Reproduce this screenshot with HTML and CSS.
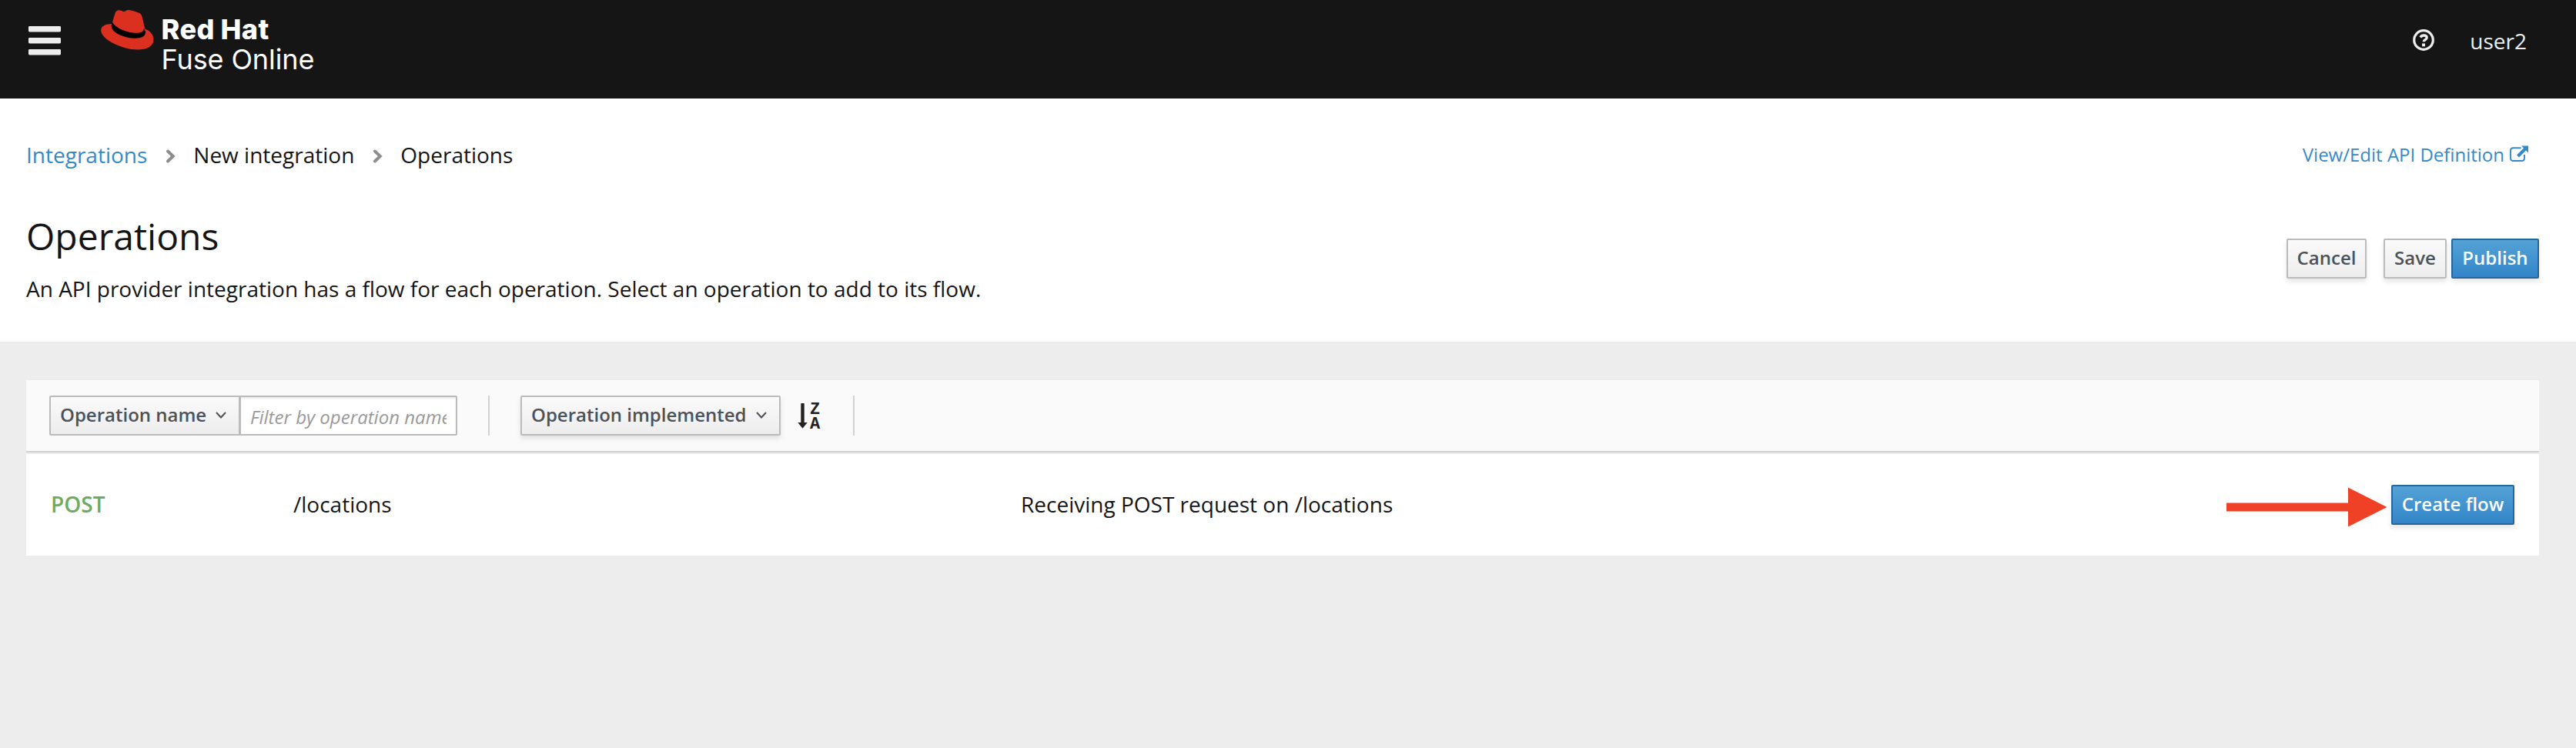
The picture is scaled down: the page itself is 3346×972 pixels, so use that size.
FILE: index.html
```html
<!DOCTYPE html>
<html lang="en">
<head>
<meta charset="utf-8">
<title>Fuse Online - Operations</title>
<link rel="stylesheet" href="styles.css">
</head>
<body>
<header class="masthead">
  <button class="menu" aria-label="Menu">
    <svg width="42" height="38" viewBox="0 0 42 38"><g fill="#ededed"><rect y="0" width="42" height="7.4" rx="1.4"/><rect y="15" width="42" height="7.4" rx="1.4"/><rect y="30" width="42" height="7.4" rx="1.4"/></g></svg>
  </button>
  <a class="brand">
    <svg class="hat" width="69" height="52" viewBox="0 0 69 52">
      <path fill="#db3020" d="M14.500 18C5 18 .2 21.500 .2 26.500C.2 38 27 51.500 48 51.500C60 51.500 68.500 47 68.500 38.500C68.500 32 64.500 27.500 57.300 24.500L53.500 8.500C52.600 5.500 51.500 4.500 47.500 3C44 1.500 38.500 0 35.500 0C33 0 32 2 30 2C28 2 26.500 .3 23.500 .3C20.800 .3 19.300 1.800 18.200 5C17.200 8.500 15.300 15 14.500 18Z"/>
      <path fill="#000" d="M15 15.500C18 23.500 35 29.800 46 29.800C53 29.800 55.500 27.500 56 24L57.800 27.500C58.800 33 54.500 36.800 45 36.800C32 36.800 15 30.500 13.700 21.500C13.500 19.500 14.300 17.500 15 15.500Z"/>
    </svg>
    <span class="wordmark"><b class="company">Red Hat</b><span class="product">Fuse Online</span></span>
  </a>
  <div class="tools">
    <svg width="28" height="28" viewBox="0 0 28 28" fill="none" stroke="#ededed"><circle cx="14" cy="14" r="12.300" stroke-width="3.200"/><path d="M9.800 10.500C11 8.700 12.500 8 14.200 8C16.500 8 18.200 9 18.200 11C18.200 13.600 14.200 13.400 14.200 16.300" stroke-width="3.300"/><path d="M14 18.500V22.300" stroke-width="4"/></svg>
    <span class="user">user2</span>
  </div>
</header>

<section class="page-head">
  <div class="crumb-row">
    <nav class="crumbs">
      <a class="link">Integrations</a>
      <svg class="sep" width="12" height="18" viewBox="0 0 12 18"><path d="M2 2.500L8.800 9L2 15.500" fill="none" stroke="#8b8d8f" stroke-width="4" stroke-linecap="round"/></svg>
      <span class="crumb-mid">New integration</span>
      <svg class="sep" width="12" height="18" viewBox="0 0 12 18"><path d="M2 2.500L8.800 9L2 15.500" fill="none" stroke="#8b8d8f" stroke-width="4" stroke-linecap="round"/></svg>
      <span class="crumb-last">Operations</span>
    </nav>
    <a class="link api-link">View/Edit API Definition
      <svg width="24" height="22" viewBox="0 0 24 22"><path d="M14.500 3.200H4.500Q1 3.200 1 6.500V16.500Q1 20 4.500 20H15.500Q19 20 19 16.500V12" fill="none" stroke="#338aca" stroke-width="1.900"/><path d="M10.500 14L20 4.500" fill="none" stroke="#338aca" stroke-width="4"/><path d="M15 .5H24V9.500Z" fill="#338aca"/></svg>
    </a>
  </div>
  <div class="title-row">
    <div>
      <h1 class="title">Operations</h1>
      <p class="lead">An API provider integration has a flow for each operation. Select an operation to add to its flow.</p>
    </div>
    <div class="actions">
      <button class="btn cancel">Cancel</button>
      <button class="btn save">Save</button>
      <button class="btn primary publish">Publish</button>
    </div>
  </div>
</section>

<main class="panel">
  <div class="toolbar">
    <button class="btn filter-type"><span>Operation name</span><svg width="14" height="9" viewBox="0 0 14 9"><path d="M1 1L7 7.500L13 1" fill="none" stroke="#4d5258" stroke-width="2"/></svg></button>
    <input class="filter-input" type="text" placeholder="Filter by operation name">
    <span class="rule"></span>
    <button class="btn sort-type"><span>Operation implemented</span><svg width="14" height="9" viewBox="0 0 14 9"><path d="M1 1L7 7.500L13 1" fill="none" stroke="#4d5258" stroke-width="2"/></svg></button>
    <svg class="sort-icon" width="30" height="36" viewBox="0 0 30 36"><path d="M4.300 2.500Q4.300 2 4.800 2H8.200Q8.700 2 8.700 2.500V27H12.700L6.500 34.800L.3 27H4.300Z" fill="#222"/><text class="sort-letter" x="22.500" y="16">Z</text><text class="sort-letter" x="22.500" y="34.800">A</text></svg>
    <span class="rule rule-end"></span>
  </div>
  <div class="row">
    <span class="method">POST</span>
    <span class="path">/locations</span>
    <span class="desc">Receiving POST request on /locations</span>
    <svg class="pointer" width="210" height="52" viewBox="0 0 210 52"><path d="M0 20.500H158V.5L208.500 26L158 51.500V31.500H0Z" fill="#ee4126"/></svg>
    <button class="btn primary create">Create flow</button>
  </div>
</main>
</body>
</html>
```
FILE: styles.css
```css
* { box-sizing: border-box; }
body {
  margin: 0;
  background: #ededed;
  color: #151515;
  font-family: "Open Sans", sans-serif;
  font-size: 28px;
  line-height: 42px;
  white-space: nowrap;
}
svg { display: block; flex: none; overflow: visible; }
button { font: inherit; }

.masthead { display: flex; align-items: flex-start; height: 128px; background: #151515; padding: 0 64px 0 37px; }
.menu { margin-top: 33.5px; padding: 0; border: 0; background: none; }
.brand { display: flex; margin-left: 52px; }
.hat { margin-top: 13px; }
.wordmark { display: flex; flex-direction: column; margin: 19px 0 0 9.5px; color: #fff; font-family: Inter, sans-serif; font-size: 36px; line-height: 39px; }
.company { font-weight: 800; letter-spacing: 0.5px; word-spacing: -1px; }
.product { font-weight: 400; letter-spacing: -0.1px; }
.tools { display: flex; margin-left: auto; color: #ededed; }
.tools svg { margin-top: 38px; }
.user { margin: 32px 0 0 46px; }

.page-head { height: 316px; background: #fff; padding: 52px 48px 0 34px; }
.crumb-row { display: flex; height: 42px; justify-content: space-between; }
.crumbs { display: flex; }
.link { color: #338aca; }
.sep { margin: 14px 23px 0 25px; }
.api-link { display: flex; gap: 7px; margin-right: 14px; font-size: 24px; }
.api-link svg { margin-top: 9px; }
.title-row { display: flex; justify-content: space-between; }
.title { margin: 54px 0 0; font-size: 48px; font-weight: 400; line-height: 62px; }
.lead { margin: 16px 0 0; }
.actions { display: flex; padding-top: 88px; }

.btn {
  height: 52px;
  padding: 0 0 2px;
  border: 2px solid #bbb;
  border-radius: 2px;
  background: linear-gradient(#fafafa, #ededed);
  box-shadow: 0 4px 6px rgba(3, 3, 3, 0.1);
  color: #4d5258;
  font-size: 24px;
  font-weight: 600;
  line-height: 44px;
}
.primary { border-color: #25669c; background: linear-gradient(#54a2d6, #3385c8); color: #fff; }
.cancel { width: 104px; margin-right: 22px; }
.save { width: 82px; margin-right: 6px; }
.publish { width: 114px; }

.panel { margin: 50px 48px 0 34px; background: #fff; }
.toolbar { display: flex; height: 96px; padding: 20px 0 0 30px; background: #fafafa; border-bottom: 2px solid #ededed; box-shadow: inset 0 -2px #d1d1d1; }
.filter-type, .sort-type { display: flex; align-items: center; gap: 12px; padding-left: 12px; }
.filter-type { width: 248px; box-shadow: none; }
.filter-input {
  width: 284px;
  height: 52px;
  margin-left: -2px;
  padding: 4px 12px 2px;
  border: 2px solid #bbb;
  border-left-width: 3px;
  border-radius: 0 2px 2px 0;
  background: #fff;
  box-shadow: inset 0 2px 2px rgba(3, 3, 3, 0.075);
  font: 24px "Open Sans", sans-serif;
}
.filter-input::placeholder { color: #999; font-style: italic; opacity: 1; }
.rule { width: 2px; height: 52px; margin: 0 40px; background: #d1d1d1; }
.sort-type { width: 338px; }
.sort-icon { margin: 8px 0 0 22px; }
.sort-letter { fill: #222; font: bold 22px "Liberation Mono", monospace; text-anchor: middle; }
.rule-end { margin: 0 0 0 42px; }

.row { display: flex; align-items: center; height: 132px; padding: 0 32px; }
.method, .path, .desc { margin-top: -2px; }
.method { width: 315px; color: #6cac62; font-weight: 600; }
.path { width: 945px; }
.pointer { margin: 6px 4px 0 auto; }
.create { width: 160px; }
```
